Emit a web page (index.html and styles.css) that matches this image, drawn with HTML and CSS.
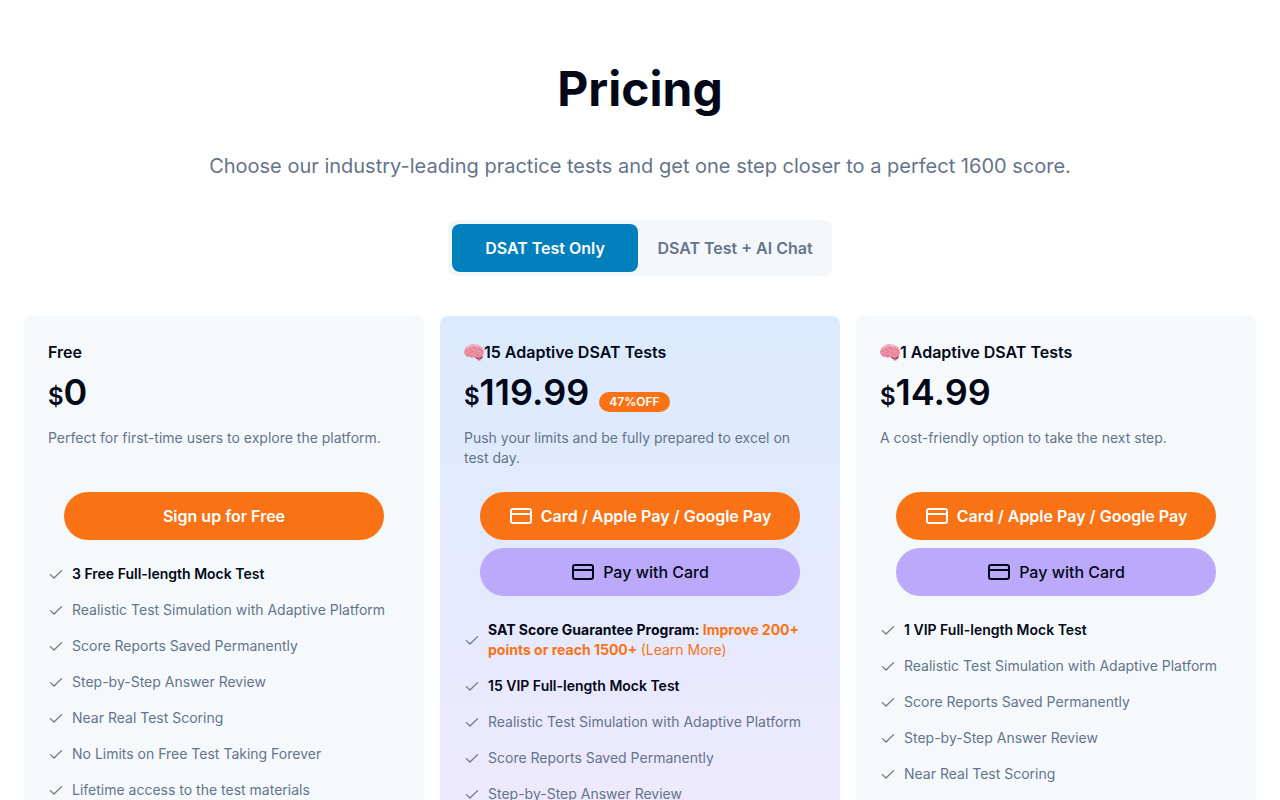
FILE: index.html
```html
<!DOCTYPE html>
<html lang="en">

<head>
    <meta charset="UTF-8" />
    <meta name="viewport" content="width=device-width, initial-scale=1.0" />
    <title>Pricing</title>
    <link rel="stylesheet" href="styles.css">
</head>

<body>
    <!-- Shared icons -->
    <svg class="sprite" aria-hidden="true">
        <symbol id="check" viewBox="0 0 16 16">
            <path d="M2.4 8.6 6 12l7.6-7.4" fill="none" stroke="currentColor" stroke-width="1.2" stroke-linecap="round" stroke-linejoin="round" />
        </symbol>
        <symbol id="card" viewBox="0 0 24 24">
            <rect x="2" y="5" width="20" height="14" rx="2" fill="none" stroke="currentColor" stroke-width="2" />
            <path d="M2 10h20" stroke="currentColor" stroke-width="2" />
        </symbol>
        <symbol id="brain" viewBox="0 0 40 34">
            <path d="M20 24c4-3 12-4 18-1 0 5-3 8-7 8-4 1-9-2-11-7z" fill="#a84560" />
            <path d="M24 23c2 3 3 6 4 10h5c0-4-1-7-2-10z" fill="#c9647c" />
            <path d="M0 17C0 11 3 7 8 4c4-3 9-4 14-3 6-1 11 2 14 6 3 3 4 7 4 11-1 5-4 8-8 8-4 1-8 1-11-1-3 3-7 3-9 1-6 1-11-3-12-9z" fill="#ef93a8" />
            <path d="M7 8c3-4 8-5 12-4 5-2 10-1 13 3" fill="none" stroke="#fcc5d0" stroke-width="2.4" stroke-linecap="round" />
            <path d="M3 16c3-3 6-2 7 1M10 8c0 4 3 5 6 4M19 4c-2 3 0 5 3 5s4 3 2 5M14 17c3-3 7-2 9 1s6 2 7-1M31 7c-1 3 0 4 3 5s3 4 2 6M4 21c3 2 6 1 8-1M12 24c3-1 6-2 8 1M25 23c3 0 6 0 9-3" fill="none" stroke="#d46a86" stroke-width="1.3" stroke-linecap="round" />
        </symbol>
    </svg>

    <main class="pricing">
        <h1>Pricing</h1>
        <p class="subtitle">Choose our industry-leading practice tests and get one step closer to a perfect 1600 score.</p>

        <div class="tabs">
            <button type="button" class="tab active">DSAT Test Only</button>
            <button type="button" class="tab">DSAT Test + AI Chat</button>
        </div>

        <div class="plans">
            <section class="plan">
                <h2>Free</h2>
                <div class="price"><span class="currency">$</span><span class="amount">0</span></div>
                <p class="desc">Perfect for first-time users to explore the platform.</p>
                <div class="actions">
                    <button type="button" class="btn btn-orange">Sign up for Free</button>
                </div>
                <ul class="features">
                    <li class="strong"><svg class="check"><use href="#check" /></svg><span>3 Free Full-length Mock Test</span></li>
                    <li><svg class="check"><use href="#check" /></svg><span>Realistic Test Simulation with Adaptive Platform</span></li>
                    <li><svg class="check"><use href="#check" /></svg><span>Score Reports Saved Permanently</span></li>
                    <li><svg class="check"><use href="#check" /></svg><span>Step-by-Step Answer Review</span></li>
                    <li><svg class="check"><use href="#check" /></svg><span>Near Real Test Scoring</span></li>
                    <li><svg class="check"><use href="#check" /></svg><span>No Limits on Free Test Taking Forever</span></li>
                    <li><svg class="check"><use href="#check" /></svg><span>Lifetime access to the test materials</span></li>
                </ul>
            </section>

            <section class="plan featured">
                <h2><svg class="brain"><use href="#brain" /></svg>15 Adaptive DSAT Tests</h2>
                <div class="price"><span class="currency">$</span><span class="amount">119.99</span><span class="badge">47%OFF</span></div>
                <p class="desc">Push your limits and be fully prepared to excel on test day.</p>
                <div class="actions">
                    <button type="button" class="btn btn-orange"><svg class="card-icon"><use href="#card" /></svg>Card / Apple Pay / Google Pay</button>
                    <button type="button" class="btn btn-purple"><svg class="card-icon"><use href="#card" /></svg>Pay with Card</button>
                </div>
                <ul class="features">
                    <li class="strong guarantee"><svg class="check"><use href="#check" /></svg><span>SAT Score Guarantee Program: <span class="highlight">Improve 200+ points or reach 1500+</span> <a href="#">(Learn More)</a></span></li>
                    <li class="strong"><svg class="check"><use href="#check" /></svg><span>15 VIP Full-length Mock Test</span></li>
                    <li><svg class="check"><use href="#check" /></svg><span>Realistic Test Simulation with Adaptive Platform</span></li>
                    <li><svg class="check"><use href="#check" /></svg><span>Score Reports Saved Permanently</span></li>
                    <li><svg class="check"><use href="#check" /></svg><span>Step-by-Step Answer Review</span></li>
                </ul>
            </section>

            <section class="plan">
                <h2><svg class="brain"><use href="#brain" /></svg>1 Adaptive DSAT Tests</h2>
                <div class="price"><span class="currency">$</span><span class="amount">14.99</span></div>
                <p class="desc">A cost-friendly option to take the next step.</p>
                <div class="actions">
                    <button type="button" class="btn btn-orange"><svg class="card-icon"><use href="#card" /></svg>Card / Apple Pay / Google Pay</button>
                    <button type="button" class="btn btn-purple"><svg class="card-icon"><use href="#card" /></svg>Pay with Card</button>
                </div>
                <ul class="features">
                    <li class="strong"><svg class="check"><use href="#check" /></svg><span>1 VIP Full-length Mock Test</span></li>
                    <li><svg class="check"><use href="#check" /></svg><span>Realistic Test Simulation with Adaptive Platform</span></li>
                    <li><svg class="check"><use href="#check" /></svg><span>Score Reports Saved Permanently</span></li>
                    <li><svg class="check"><use href="#check" /></svg><span>Step-by-Step Answer Review</span></li>
                    <li><svg class="check"><use href="#check" /></svg><span>Near Real Test Scoring</span></li>
                </ul>
            </section>
        </div>
    </main>
</body>

</html>
```

FILE: styles.css
```css
* {
    margin: 0;
    padding: 0;
    box-sizing: border-box;
}

body {
    background: #fff;
    color: #020817;
    font-family: Inter, "Liberation Sans", sans-serif;
    font-size: 16px;
    line-height: 24px;
}

button {
    border: none;
    font: inherit;
    cursor: pointer;
}

.sprite {
    display: none;
}

.pricing {
    padding: 64px 24px 0;
}

h1 {
    font-size: 48px;
    line-height: 50px;
    font-weight: 700;
    text-align: center;
}

.subtitle {
    margin-top: 38px;
    font-size: 20px;
    line-height: 28px;
    color: #64748b;
    text-align: center;
}

.tabs {
    display: grid;
    grid-template-columns: 1fr 1fr;
    gap: 4px;
    max-width: 384px;
    margin: 40px auto;
    padding: 4px;
    background: #f3f7fa;
    border-radius: 8px;
}

.tab {
    height: 48px;
    background: transparent;
    color: #64748b;
    font-weight: 600;
    border-radius: 8px;
}

.tab.active {
    background: #007fbd;
    color: #fff;
}

.plans {
    display: grid;
    grid-template-columns: repeat(3, 1fr);
    gap: 16px;
}

.plan {
    padding: 24px;
    background: #f5f9fc;
    border-radius: 8px;
}

.plan.featured {
    background: linear-gradient(to bottom, #dbeafe, #ede9fe 480px);
}

h2 {
    display: flex;
    align-items: center;
    font-size: 16px;
    line-height: 24px;
    font-weight: 600;
}

.brain {
    width: 20px;
    height: 17px;
}

.price {
    display: flex;
    align-items: baseline;
    height: 40px;
    margin-top: 8px;
    line-height: 40px;
    font-weight: 600;
}

.currency {
    font-size: 24px;
}

.amount {
    font-size: 36px;
}

.badge {
    align-self: flex-end;
    margin-left: 10px;
    padding: 0 10px;
    background: #f97316;
    color: #fff;
    font-size: 12px;
    line-height: 20px;
    font-weight: 600;
    border-radius: 10px;
}

.desc {
    min-height: 40px;
    margin-top: 16px;
    font-size: 14px;
    line-height: 20px;
    color: #64748b;
}

.actions {
    display: flex;
    flex-direction: column;
    gap: 8px;
    margin: 24px 16px;
}

.btn {
    display: flex;
    align-items: center;
    justify-content: center;
    gap: 8px;
    height: 48px;
    border-radius: 24px;
}

.btn-orange {
    background: #f97316;
    color: #fff;
    font-weight: 600;
}

.btn-purple {
    background: #bba9fb;
    color: #020817;
    font-weight: 500;
}

.card-icon {
    width: 24px;
    height: 24px;
}

.features {
    display: flex;
    flex-direction: column;
    gap: 16px;
    list-style: none;
    font-size: 14px;
    line-height: 20px;
    color: #64748b;
}

.features li {
    display: flex;
    align-items: center;
    gap: 8px;
}

.features .strong {
    color: #020817;
    font-weight: 600;
}

.features .guarantee {
    font-weight: 700;
}

.check {
    flex: none;
    width: 16px;
    height: 16px;
    color: #6b7280;
}

.highlight {
    color: #f97316;
}

.features a {
    color: #f97316;
    font-weight: 400;
    text-decoration: none;
}
```
